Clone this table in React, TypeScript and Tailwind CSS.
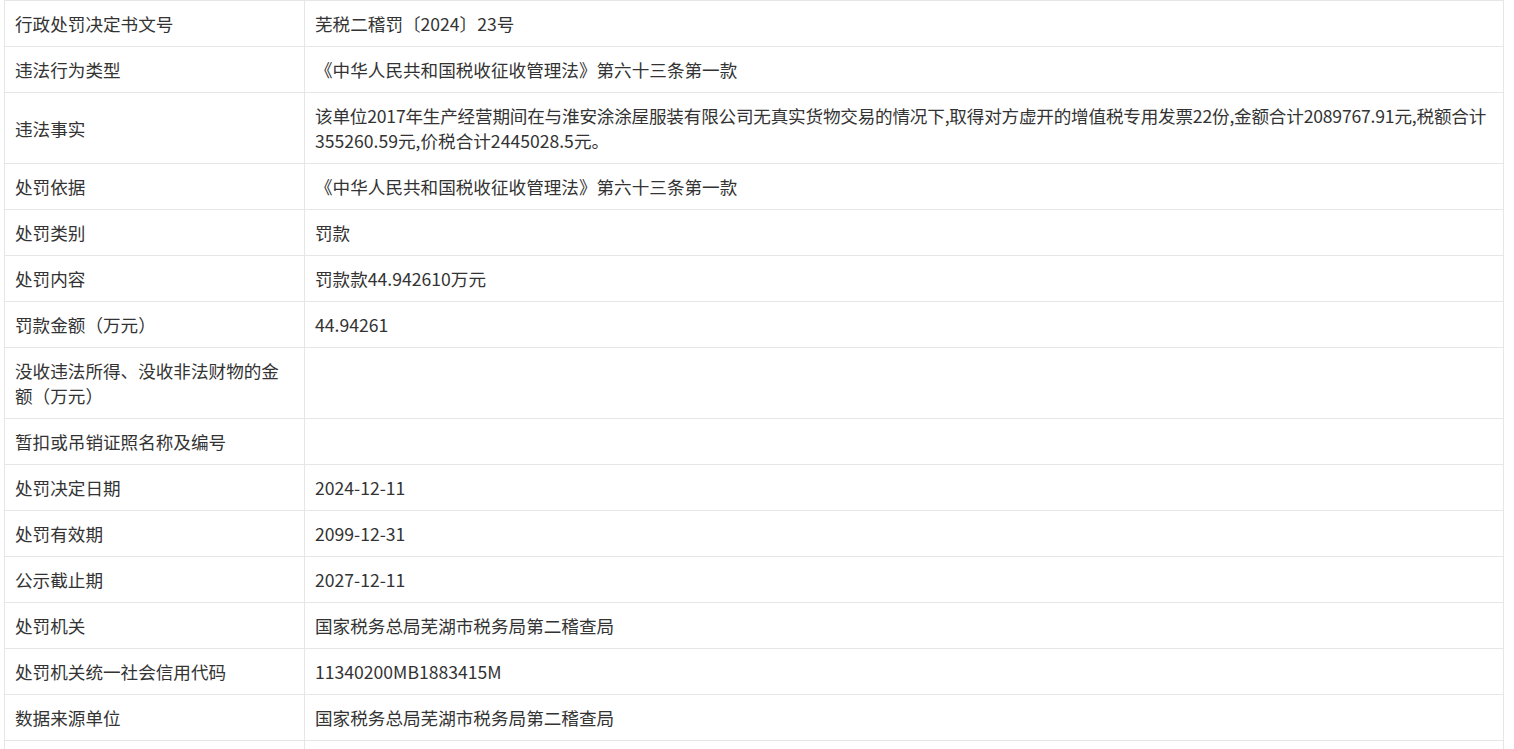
import React from 'react';

type Row = { label: string; value: React.ReactNode };

const rows: Row[] = [
  { label: '行政处罚决定书文号', value: '芜税二稽罚〔2024〕23号' },
  { label: '违法行为类型', value: '《中华人民共和国税收征收管理法》第六十三条第一款' },
  {
    label: '违法事实',
    value: (
      <>
        <span className="whitespace-nowrap tracking-[-0.2px]">
          该单位2017年生产经营期间在与淮安涂涂屋服装有限公司无真实货物交易的情况下,取得对方虚开的增值税专用发票22份,金额合计2089767.91元,税额合计
        </span>
        <br />
        355260.59元,价税合计2445028.5元。
      </>
    ),
  },
  { label: '处罚依据', value: '《中华人民共和国税收征收管理法》第六十三条第一款' },
  { label: '处罚类别', value: '罚款' },
  { label: '处罚内容', value: '罚款款44.942610万元' },
  { label: '罚款金额（万元）', value: '44.94261' },
  { label: '没收违法所得、没收非法财物的金额（万元）', value: '' },
  { label: '暂扣或吊销证照名称及编号', value: '' },
  { label: '处罚决定日期', value: '2024-12-11' },
  { label: '处罚有效期', value: '2099-12-31' },
  { label: '公示截止期', value: '2027-12-11' },
  { label: '处罚机关', value: '国家税务总局芜湖市税务局第二稽查局' },
  { label: '处罚机关统一社会信用代码', value: '11340200MB1883415M' },
  { label: '数据来源单位', value: '国家税务总局芜湖市税务局第二稽查局' },
  { label: '', value: '' },
];

const App: React.FC = () => {
  return (
    <div
      className="min-h-screen bg-white pl-[4px] text-[#333] text-[17.6px] leading-[25px]"
      style={{ fontFamily: '"Microsoft YaHei", "Noto Sans CJK SC", sans-serif' }}
    >
      <table className="w-[1500px] border-collapse table-fixed">
        <colgroup>
          <col className="w-[300px]" />
          <col />
        </colgroup>
        <tbody>
          {rows.map((row, i) => (
            <tr key={i}>
              <td className="border border-[#e6e6e6] px-[10px] py-[10px] align-middle">
                {row.label || '\u00a0'}
              </td>
              <td className="border border-[#e6e6e6] px-[10px] py-[10px] align-middle">
                {row.value || '\u00a0'}
              </td>
            </tr>
          ))}
        </tbody>
      </table>
    </div>
  );
};

export default App;
